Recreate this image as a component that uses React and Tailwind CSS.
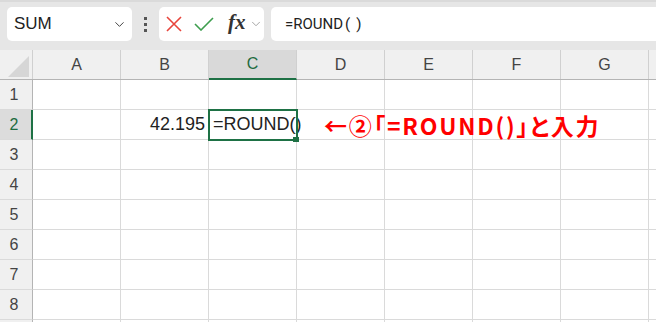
import { ChevronDown } from "lucide-react";

const cols = ["A", "B", "C", "D", "E", "F", "G", "H"];
const rows = [1, 2, 3, 4, 5, 6, 7, 8, 9];

const Cell = ({ row, col }) => {
  if (row === 2 && col === "B") {
    return (
      <div className="w-[88px] shrink-0 h-full border-r border-b border-[#dadada] flex items-center justify-end pr-[3px] text-[18px] text-[#222]">
        42.195
      </div>
    );
  }
  if (row === 2 && col === "C") {
    return (
      <div className="relative w-[88px] shrink-0 h-full border-r border-b border-[#dadada] flex items-center pl-[4px] text-[18px] text-[#222] whitespace-nowrap z-10">
        <span>=ROUND()</span>
        <div className="absolute -top-[1px] -left-[1px] w-[90px] h-[32px] border-2 border-[#1e7145]" />
        <div className="absolute -right-[3px] -bottom-[3px] w-[6px] h-[5px] bg-[#1e7145]" />
      </div>
    );
  }
  return <div className="w-[88px] shrink-0 h-full border-r border-b border-[#dadada]" />;
};

const App = () => {
  return (
    <div className="relative w-[656px] h-[322px] overflow-hidden bg-white font-['Liberation_Sans',Arial,sans-serif]">
      {/* toolbar */}
      <div className="h-[50px] bg-[#e6e6e6] border-t-2 border-[#dadada] flex items-start pt-[5px] pl-[7px]">
        <div className="w-[125px] h-[34px] bg-white rounded-[5px] flex items-center pl-[7px] pr-[5px] text-[17px] text-[#222]">
          <span className="flex-1">SUM</span>
          <ChevronDown size={15} strokeWidth={1.6} className="text-[#444]" />
        </div>
        <div className="w-[27px] h-[34px] flex flex-col items-center justify-center gap-[3px]">
          <div className="w-[3px] h-[3px] bg-[#555]" />
          <div className="w-[3px] h-[3px] bg-[#555]" />
          <div className="w-[3px] h-[3px] bg-[#555]" />
        </div>
        <div className="w-[105px] h-[34px] bg-white rounded-[5px] flex items-center pl-[7px]">
          <svg width="16" height="16" viewBox="0 0 16 16">
            <path d="M1 1 L15 15 M15 1 L1 15" stroke="#e8453c" strokeWidth="1.6" fill="none" />
          </svg>
          <svg width="20" height="14" viewBox="0 0 20 14" className="ml-[12px]">
            <path d="M1 7 L7 13 L19 1" stroke="#3e9e4e" strokeWidth="1.6" fill="none" />
          </svg>
          <span className="ml-[14px] text-[21px] leading-none italic font-bold text-[#333] font-['Liberation_Serif',serif] -mt-[3px]">
            fx
          </span>
          <ChevronDown size={14} strokeWidth={1.5} className="ml-[3px] text-[#999]" />
        </div>
        <div className="ml-[7px] flex-1 -mr-2 h-[34px] bg-white rounded-[5px] flex items-center pl-[14px] text-[15px] text-[#222] font-['Roboto',sans-serif]">
          =ROUND<span className="ml-[2px]">(</span>
          <span className="ml-[6px]">)</span>
        </div>
      </div>

      {/* column header */}
      <div className="flex h-[30px] bg-[#f0f0f0] border-b border-[#b4b4b4]">
        <div className="w-[33px] shrink-0 h-full border-r border-[#d0d0d0] flex items-end justify-end pr-[3px] pb-[2px]">
          <svg width="21" height="21" viewBox="0 0 21 21">
            <path d="M21 0 L21 21 L0 21 Z" fill="#d6d6d6" />
          </svg>
        </div>
        {cols.map((c) =>
          c === "C" ? (
            <div
              key={c}
              className="w-[88px] shrink-0 h-[30px] bg-[#d9d9d9] border-r border-[#d0d0d0] border-b-[2px] border-b-[#1e7145] flex items-center justify-center text-[16px] text-[#1e6b40]"
            >
              {c}
            </div>
          ) : (
            <div
              key={c}
              className="w-[88px] shrink-0 h-full border-r border-[#d0d0d0] flex items-center justify-center text-[16px] text-[#444]"
            >
              {c === "H" ? "" : c}
            </div>
          )
        )}
      </div>

      {/* rows */}
      {rows.map((r) => (
        <div key={r} className="flex h-[30px]">
          {r === 2 ? (
            <div className="w-[33px] shrink-0 h-full bg-[#dcdcdc] border-r-2 border-[#1e7145] border-b border-b-[#dadada] flex items-center justify-center pr-[3px] text-[16px] text-[#1e6b40]">
              {r}
            </div>
          ) : (
            <div className="w-[33px] shrink-0 h-full bg-[#f0f0f0] border-r border-[#b4b4b4] border-b border-b-[#dadada] flex items-center justify-center pr-[4px] text-[16px] text-[#444]">
              {r === 9 ? "" : r}
            </div>
          )}
          {cols.map((c) => (
            <Cell key={c} row={r} col={c} />
          ))}
        </div>
      ))}

      {/* annotation */}
      <div className="absolute left-[324px] top-[114px] z-20 whitespace-nowrap leading-none text-[23px] font-bold tracking-[1.8px] text-[#ff0000] font-['Noto_Sans_CJK_JP',sans-serif] [font-feature-settings:'palt']">
        ←②「=ROUND()」と入力
      </div>
    </div>
  );
};

export default App;
